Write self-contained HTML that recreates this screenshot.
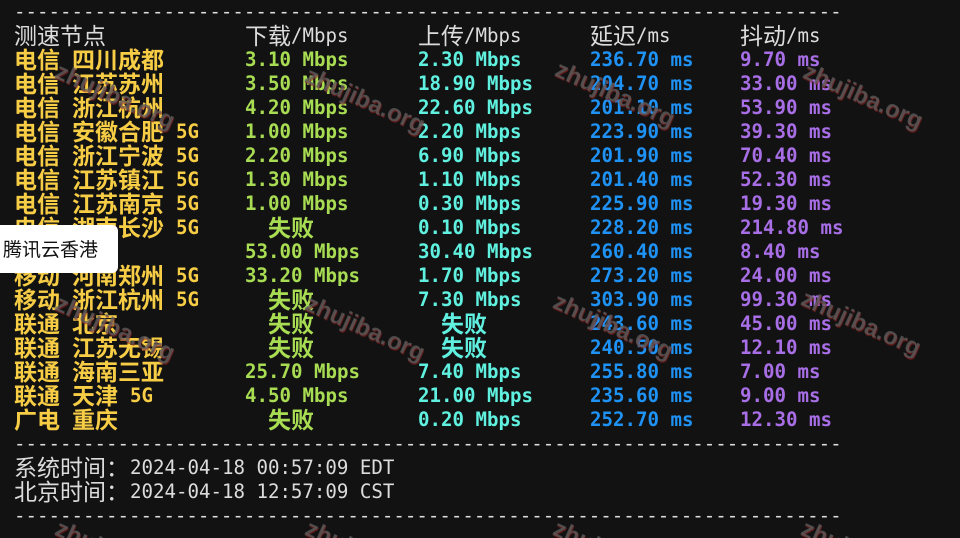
<!DOCTYPE html>
<html><head><meta charset="utf-8"><style>
html,body{margin:0;padding:0;width:960px;height:538px;overflow:hidden;}
body{background:#121212;position:relative;font-family:"DejaVu Sans Mono","Liberation Mono","Noto Sans CJK SC",monospace;font-size:19.1px;}
#wrap{position:absolute;left:0;top:0;width:960px;height:538px;overflow:hidden;}
.r{position:absolute;left:0;height:24px;line-height:24px;white-space:pre;font-weight:bold;}
.r span{position:absolute;top:0;white-space:pre;}
.r span.c{top:-2px;}
.c{font-family:"Noto Sans CJK SC","WenQuanYi Zen Hei",sans-serif;font-size:23px;line-height:24px;}
.y{color:#f7cd46}.g{color:#a8dc52}.t{color:#5ff0df}.b{color:#1f93f5}.p{color:#a86ee6}.w{color:#dcdcdc;font-weight:normal}
.wm{position:absolute;font-family:"Liberation Sans","DejaVu Sans",sans-serif;font-weight:bold;font-size:24px;color:rgba(95,95,95,0.75);text-shadow:1px 1px 0 rgba(150,30,30,0.55);transform:rotate(24deg);transform-origin:left top;white-space:nowrap;}
.pop{position:absolute;left:0;top:225px;width:118px;height:48px;background:#fff;border-radius:0 6px 6px 0;font-family:"Noto Sans CJK SC",sans-serif;font-size:19px;line-height:48px;color:#111;padding-left:3px;box-sizing:border-box;}
</style></head><body><div id="wrap">
<div class="r w" style="top:0px"><span style="left:14px">------------------------------------------------------------------------</span></div>
<div class="r w" style="top:24px"><span style="left:14px" class="c">测速节点</span><span class="c" style="left:245px">下载</span><span style="left:291px">/Mbps</span><span class="c" style="left:418px">上传</span><span style="left:464px">/Mbps</span><span class="c" style="left:590px">延迟</span><span style="left:636px">/ms</span><span class="c" style="left:740px">抖动</span><span style="left:786px">/ms</span></div>

<div class="r" style="top:48px"><span class="y c" style="left:14px">电信</span><span class="y c" style="left:72px">四川成都</span><span class="g" style="left:245px">3.10 Mbps</span><span class="t" style="left:418px">2.30 Mbps</span><span class="b" style="left:590px">236.70 ms</span><span class="p" style="left:740px">9.70 ms</span></div>
<div class="r" style="top:72px"><span class="y c" style="left:14px">电信</span><span class="y c" style="left:72px">江苏苏州</span><span class="g" style="left:245px">3.50 Mbps</span><span class="t" style="left:418px">18.90 Mbps</span><span class="b" style="left:590px">204.70 ms</span><span class="p" style="left:740px">33.00 ms</span></div>
<div class="r" style="top:96px"><span class="y c" style="left:14px">电信</span><span class="y c" style="left:72px">浙江杭州</span><span class="g" style="left:245px">4.20 Mbps</span><span class="t" style="left:418px">22.60 Mbps</span><span class="b" style="left:590px">201.10 ms</span><span class="p" style="left:740px">53.90 ms</span></div>
<div class="r" style="top:120px"><span class="y c" style="left:14px">电信</span><span class="y c" style="left:72px">安徽合肥</span><span class="y" style="left:176px">5G</span><span class="g" style="left:245px">1.00 Mbps</span><span class="t" style="left:418px">2.20 Mbps</span><span class="b" style="left:590px">223.90 ms</span><span class="p" style="left:740px">39.30 ms</span></div>
<div class="r" style="top:144px"><span class="y c" style="left:14px">电信</span><span class="y c" style="left:72px">浙江宁波</span><span class="y" style="left:176px">5G</span><span class="g" style="left:245px">2.20 Mbps</span><span class="t" style="left:418px">6.90 Mbps</span><span class="b" style="left:590px">201.90 ms</span><span class="p" style="left:740px">70.40 ms</span></div>
<div class="r" style="top:168px"><span class="y c" style="left:14px">电信</span><span class="y c" style="left:72px">江苏镇江</span><span class="y" style="left:176px">5G</span><span class="g" style="left:245px">1.30 Mbps</span><span class="t" style="left:418px">1.10 Mbps</span><span class="b" style="left:590px">201.40 ms</span><span class="p" style="left:740px">52.30 ms</span></div>
<div class="r" style="top:192px"><span class="y c" style="left:14px">电信</span><span class="y c" style="left:72px">江苏南京</span><span class="y" style="left:176px">5G</span><span class="g" style="left:245px">1.00 Mbps</span><span class="t" style="left:418px">0.30 Mbps</span><span class="b" style="left:590px">225.90 ms</span><span class="p" style="left:740px">19.30 ms</span></div>
<div class="r" style="top:216px"><span class="y c" style="left:14px">电信</span><span class="y c" style="left:72px">湖南长沙</span><span class="y" style="left:176px">5G</span><span class="g c" style="left:268px">失败</span><span class="t" style="left:418px">0.10 Mbps</span><span class="b" style="left:590px">228.20 ms</span><span class="p" style="left:740px">214.80 ms</span></div>
<div class="r" style="top:240px"><span class="g" style="left:245px">53.00 Mbps</span><span class="t" style="left:418px">30.40 Mbps</span><span class="b" style="left:590px">260.40 ms</span><span class="p" style="left:740px">8.40 ms</span></div>
<div class="r" style="top:264px"><span class="y c" style="left:14px">移动</span><span class="y c" style="left:72px">河南郑州</span><span class="y" style="left:176px">5G</span><span class="g" style="left:245px">33.20 Mbps</span><span class="t" style="left:418px">1.70 Mbps</span><span class="b" style="left:590px">273.20 ms</span><span class="p" style="left:740px">24.00 ms</span></div>
<div class="r" style="top:288px"><span class="y c" style="left:14px">移动</span><span class="y c" style="left:72px">浙江杭州</span><span class="y" style="left:176px">5G</span><span class="g c" style="left:268px">失败</span><span class="t" style="left:418px">7.30 Mbps</span><span class="b" style="left:590px">303.90 ms</span><span class="p" style="left:740px">99.30 ms</span></div>
<div class="r" style="top:312px"><span class="y c" style="left:14px">联通</span><span class="y c" style="left:72px">北京</span><span class="g c" style="left:268px">失败</span><span class="t c" style="left:441px">失败</span><span class="b" style="left:590px">243.60 ms</span><span class="p" style="left:740px">45.00 ms</span></div>
<div class="r" style="top:336px"><span class="y c" style="left:14px">联通</span><span class="y c" style="left:72px">江苏无锡</span><span class="g c" style="left:268px">失败</span><span class="t c" style="left:441px">失败</span><span class="b" style="left:590px">240.50 ms</span><span class="p" style="left:740px">12.10 ms</span></div>
<div class="r" style="top:360px"><span class="y c" style="left:14px">联通</span><span class="y c" style="left:72px">海南三亚</span><span class="g" style="left:245px">25.70 Mbps</span><span class="t" style="left:418px">7.40 Mbps</span><span class="b" style="left:590px">255.80 ms</span><span class="p" style="left:740px">7.00 ms</span></div>
<div class="r" style="top:384px"><span class="y c" style="left:14px">联通</span><span class="y c" style="left:72px">天津</span><span class="y" style="left:130px">5G</span><span class="g" style="left:245px">4.50 Mbps</span><span class="t" style="left:418px">21.00 Mbps</span><span class="b" style="left:590px">235.60 ms</span><span class="p" style="left:740px">9.00 ms</span></div>
<div class="r" style="top:408px"><span class="y c" style="left:14px">广电</span><span class="y c" style="left:72px">重庆</span><span class="g c" style="left:268px">失败</span><span class="t" style="left:418px">0.20 Mbps</span><span class="b" style="left:590px">252.70 ms</span><span class="p" style="left:740px">12.30 ms</span></div>
<div class="r w" style="top:432px"><span style="left:14px">------------------------------------------------------------------------</span></div>
<div class="r w" style="top:456px"><span class="c" style="left:14px">系统时间：</span><span style="left:130px">2024-04-18 00:57:09 EDT</span></div>
<div class="r w" style="top:480px"><span class="c" style="left:14px">北京时间：</span><span style="left:130px">2024-04-18 12:57:09 CST</span></div>
<div class="r w" style="top:504px"><span style="left:14px">------------------------------------------------------------------------</span></div>

<div class="wm" style="left:62px;top:58px">zhujiba.org</div>
<div class="wm" style="left:312px;top:62px">zhujiba.org</div>
<div class="wm" style="left:562px;top:56px">zhujiba.org</div>
<div class="wm" style="left:810px;top:58px">zhujiba.org</div>
<div class="wm" style="left:62px;top:290px">zhujiba.org</div>
<div class="wm" style="left:312px;top:290px">zhujiba.org</div>
<div class="wm" style="left:560px;top:288px">zhujiba.org</div>
<div class="wm" style="left:808px;top:285px">zhujiba.org</div>
<div class="wm" style="left:62px;top:515px">zhujiba.org</div>
<div class="wm" style="left:312px;top:515px">zhujiba.org</div>
<div class="wm" style="left:560px;top:515px">zhujiba.org</div>
<div class="wm" style="left:808px;top:515px">zhujiba.org</div>

<div class="pop">腾讯云香港</div>
</div></body></html>
